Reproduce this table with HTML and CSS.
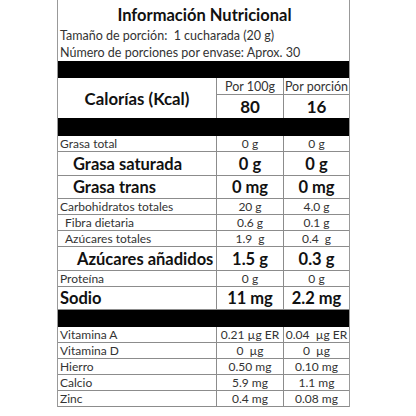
FILE: index.html
```html
<!DOCTYPE html>
<html lang="es">
<head>
<meta charset="utf-8">
<link rel="stylesheet" href="styles.css">
</head>
<body>
<div class="label">
  <div class="head">
    <div class="title">Información Nutricional</div>
    <div class="serv">Tamaño de porción:  1 cucharada (20 g)</div>
    <div class="serv">Número de porciones por envase: Aprox. 30</div>
  </div>
  <div class="bar b17"></div>
  <div class="cal">
    <div class="cal-name">Calorías (Kcal)</div>
    <div class="c ph">Por 100g</div>
    <div class="c ph last">Por porción</div>
    <div class="c cv">80</div>
    <div class="c cv last">16</div>
  </div>
  <div class="bar b18"></div>
  <div class="row s"><div class="n">Grasa total</div><div class="c">0 g</div><div class="c last">0 g</div></div>
  <div class="row big h24"><div class="n i1">Grasa saturada</div><div class="c">0 g</div><div class="c last">0 g</div></div>
  <div class="row big h23"><div class="n i1">Grasa trans</div><div class="c">0 mg</div><div class="c last">0 mg</div></div>
  <div class="row s"><div class="n">Carbohidratos totales</div><div class="c">20 g</div><div class="c last">4.0 g</div></div>
  <div class="row s"><div class="n i2">Fibra dietaria</div><div class="c">0.6 g</div><div class="c last">0.1 g</div></div>
  <div class="row s"><div class="n i2">Azúcares totales</div><div class="c">1.9  g</div><div class="c last">0.4  g</div></div>
  <div class="row big h24"><div class="n i3">Azúcares añadidos</div><div class="c">1.5 g</div><div class="c last">0.3 g</div></div>
  <div class="row s"><div class="n">Proteína</div><div class="c">0 g</div><div class="c last">0 g</div></div>
  <div class="row big h23"><div class="n">Sodio</div><div class="c">11 mg</div><div class="c last">2.2 mg</div></div>
  <div class="bar b17"></div>
  <div class="row s"><div class="n">Vitamina A</div><div class="c">0.21 µg ER</div><div class="c last">0.04  µg ER</div></div>
  <div class="row s"><div class="n">Vitamina D</div><div class="c">0  µg</div><div class="c last">0  µg</div></div>
  <div class="row s"><div class="n">Hierro</div><div class="c">0.50 mg</div><div class="c last">0.10 mg</div></div>
  <div class="row s"><div class="n">Calcio</div><div class="c">5.9 mg</div><div class="c last">1.1 mg</div></div>
  <div class="row s"><div class="n">Zinc</div><div class="c">0.4 mg</div><div class="c last">0.08 mg</div></div>
</div>
</body>
</html>
```
FILE: styles.css
```css
html, body { margin: 0; padding: 0; background: #fff; }
body { font-family: Lato, "Open Sans", sans-serif; color: #333; }
.label {
  width: 293px;
  margin-left: 57px;
  box-sizing: border-box;
  border-left: 1px solid #999;
  border-right: 1px solid #999;
}
.head { height: 61px; box-sizing: border-box; padding: 5px 0 0 2px; }
.title { text-align: center; font-weight: 700; font-size: 16.5px; line-height: 21px; color: #111; margin-bottom: 1px; }
.serv { font-size: 12.5px; line-height: 17px; white-space: pre; }
.bar { background: #000; }
.b17 { height: 17px; }
.b18 { height: 18px; }
.cal {
  display: grid;
  grid-template-columns: 159px 67px 1fr;
  grid-template-rows: 17px 23px;
  height: 40px;
  box-sizing: border-box;
}
.cal-name {
  grid-row: span 2;
  border-right: 1px solid #8c8c8c;
  display: flex; align-items: center; justify-content: center;
  font-weight: 700; font-size: 16.8px; color: #111;
}
.c {
  border-right: 1px solid #8c8c8c;
  border-bottom: 1px solid #8c8c8c;
  display: flex; align-items: center; justify-content: center;
  white-space: pre;
  box-sizing: border-box;
}
.c.last { border-right: 0; }
.ph { font-size: 12.5px; }
.cv { font-weight: 700; font-size: 17px; color: #111; border-bottom: 0; }
.row {
  display: grid;
  grid-template-columns: 159px 67px 1fr;
  height: 16px;
  box-sizing: border-box;
  border-bottom: 1px solid #8c8c8c;
}
.row .c { border-bottom: 0; }
.n { border-right: 1px solid #8c8c8c; display: flex; align-items: center; padding-left: 2px; white-space: pre; }
.s { font-size: 12px; }
.big { font-size: 16.5px; font-weight: 700; color: #111; }
.h23 { height: 23px; }
.h24 { height: 24px; }
.i1 { padding-left: 15px; }
.i2 { padding-left: 7px; }
.i3 { padding-left: 19px; }
```
